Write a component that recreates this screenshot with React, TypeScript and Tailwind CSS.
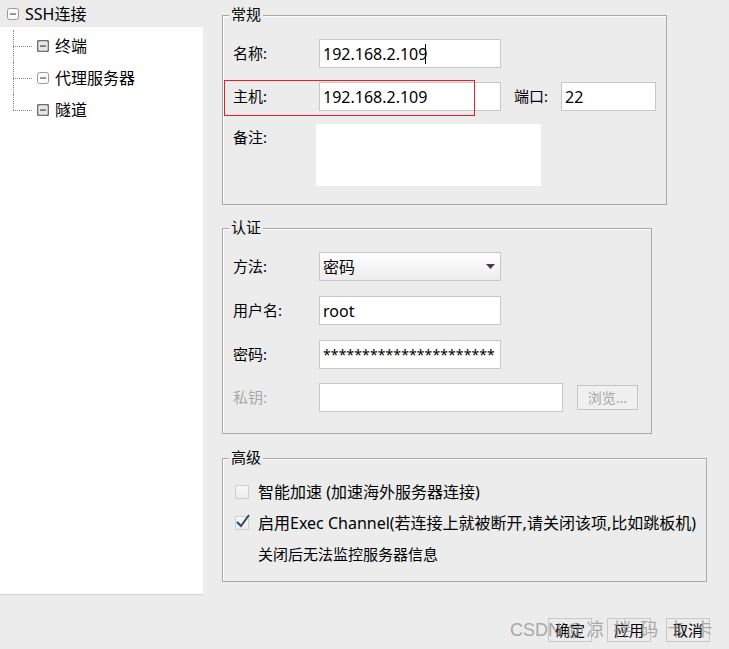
import React from "react";

const MinusBox = ({ dark = false }: { dark?: boolean }) => (
  <svg width="12" height="12" viewBox="0 0 12 12" className="shrink-0">
    <rect
      x="0.5"
      y="0.5"
      width="11"
      height="11"
      rx="2"
      fill={dark ? "#e6e6e6" : "#fafafa"}
      stroke={dark ? "#6e6e6e" : "#9a9a9a"}
      strokeWidth={dark ? 1.6 : 1}
    />
    <rect x="3" y="5.4" width="6" height="1.3" fill={dark ? "#555" : "#666"} />
  </svg>
);

const TreeChild = ({ label, last = false, dark = false }: { label: string; last?: boolean; dark?: boolean }) => (
  <div className="flex h-[32px] items-center">
    <div className="relative h-full w-[24px] shrink-0">
      <span
        className={
          last
            ? "absolute left-0 top-0 h-1/2 border-l border-dotted border-[#8c8c8c]"
            : "absolute left-0 top-0 h-full border-l border-dotted border-[#8c8c8c]"
        }
      />
      <span className="absolute left-0 top-1/2 w-[19px] border-t border-dotted border-[#8c8c8c]" />
    </div>
    <MinusBox dark={dark} />
    <span className="ml-[6px] text-[16px] text-black">{label}</span>
  </div>
);

const Input = ({ value, w, mono = false }: { value: string; w: string; mono?: boolean }) => (
  <div
    className={`${w} flex h-[29px] items-center overflow-hidden whitespace-nowrap border border-[#c8c8c8] bg-white pl-[3px] text-black ${
      mono ? "text-[14px] tracking-[0.1px]" : "text-[16px]"
    }`}
  >
    {value}
  </div>
);

const Group = ({
  title,
  className,
  children,
}: {
  title: string;
  className: string;
  children: React.ReactNode;
}) => (
  <div className={`relative border border-[#a8a8a8] shadow-[inset_1px_1px_0_#ffffff] ${className}`}>
    <span className="absolute left-[6px] top-[-13px] bg-[#ececec] px-[2px] text-[15px] leading-[22px] text-black">
      {title}
    </span>
    {children}
  </div>
);

export default function App() {
  return (
    <div className="relative flex h-[649px] w-[729px] items-start overflow-hidden bg-[#ececec] font-['Noto_Sans','Noto_Sans_CJK_SC',sans-serif]">
      {/* tree */}
      <div className="flex h-[595px] w-[203px] shrink-0 flex-col border-b border-[#d2d2d2] bg-white">
        <div className="flex h-[27px] items-center gap-[6px] bg-[#ebebeb] pl-[7px]">
          <MinusBox />
          <span className="text-[16px] text-black">SSH连接</span>
        </div>
        <div className="pl-[13px] pt-[3px]">
          <TreeChild label="终端" dark />
          <TreeChild label="代理服务器" />
          <TreeChild label="隧道" last dark />
        </div>
      </div>

      {/* form */}
      <div className="flex flex-1 flex-col pl-[19px] pt-[15px] text-[15px] text-black">
        <Group title="常规" className="h-[190px] w-[445px]">
          <div className="flex flex-col pl-[10px] pt-[23px]">
            <div className="flex items-center">
              <span className="w-[86px]">名称:</span>
              <div className="relative">
                <Input value="192.168.2.109" w="w-[182px]" />
                <span className="absolute left-[106px] top-[5px] h-[20px] w-px bg-black" />
              </div>
            </div>
            <div className="relative mt-[14px] flex items-center">
              <span className="w-[86px]">主机:</span>
              <Input value="192.168.2.109" w="w-[182px]" />
              <span className="ml-[13px] w-[47px]">端口:</span>
              <Input value="22" w="w-[95px]" />
              <span className="absolute left-[-9px] top-[-2px] h-[36px] w-[251px] border border-[#ec1c24]" />
            </div>
            <div className="mt-[13px] flex items-start">
              <span className="w-[83px] pt-[2px]">备注:</span>
              <div className="h-[62px] w-[225px] bg-white" />
            </div>
          </div>
        </Group>

        <Group title="认证" className="mt-[23px] h-[206px] w-[430px]">
          <div className="flex flex-col gap-[15px] pl-[10px] pt-[23px]">
            <div className="flex items-center">
              <span className="w-[86px]">方法:</span>
              <div className="flex h-[29px] w-[182px] items-center justify-between border border-[#c8c8c8] bg-gradient-to-b from-white to-[#ececec] pl-[3px] pr-[5px] text-[16px]">
                <span>密码</span>
                <svg width="9" height="5" viewBox="0 0 9 5">
                  <path d="M0 0 H9 L4.5 5 Z" fill="#4a3c4a" />
                </svg>
              </div>
            </div>
            <div className="flex items-center">
              <span className="w-[86px]">用户名:</span>
              <Input value="root" w="w-[182px]" />
            </div>
            <div className="flex items-center">
              <span className="w-[86px]">密码:</span>
              <Input value="**********************" w="w-[182px]" mono />
            </div>
            <div className="-mt-px flex items-center">
              <span className="w-[86px] text-[#a8a8a8]">私钥:</span>
              <div className="h-[29px] w-[244px] border border-[#c8c8c8] bg-white" />
              <div className="ml-[14px] flex h-[25px] w-[61px] items-center justify-center border border-[#c4c4c4] bg-[#f0f0f0] text-[14px] text-[#a6a6a6]">
                浏览...
              </div>
            </div>
          </div>
        </Group>

        <Group title="高级" className="mt-[24px] h-[124px] w-[485px]">
          <div className="flex flex-col pl-[12px] pt-[23px] text-[16px]">
            <div className="flex h-[20px] items-center">
              <span className="h-[14px] w-[14px] border border-[#cfcfcf] bg-gradient-to-b from-[#f7f7f7] to-[#ececec]" />
              <span className="ml-[9px]">智能加速 (加速海外服务器连接)</span>
            </div>
            <div className="mt-[11px] flex h-[20px] items-center">
              <span className="relative h-[14px] w-[14px] border border-[#cfcfcf] bg-gradient-to-b from-[#f7f7f7] to-[#ececec]">
                <svg width="16" height="16" viewBox="0 0 16 16" className="absolute left-[-1px] top-[-4px]">
                  <path d="M2 9 L6 13 L14 2" fill="none" stroke="#2c4a63" strokeWidth="2" />
                </svg>
              </span>
              <span className="ml-[9px] whitespace-nowrap">启用Exec Channel(若连接上就被断开,请关闭该项,比如跳板机)</span>
            </div>
            <div className="mt-[11px] flex h-[20px] items-center pl-[23px] text-[15px]">关闭后无法监控服务器信息</div>
          </div>
        </Group>

        <div className="mt-[36px] flex gap-[15px] pl-[326px]">
          <div className="flex h-[24px] w-[44px] items-center justify-center border border-[#c8c8c8] text-[15px]">确定</div>
          <div className="flex h-[24px] w-[44px] items-center justify-center border border-[#c8c8c8] text-[15px]">应用</div>
          <div className="flex h-[24px] w-[44px] items-center justify-center border border-[#c8c8c8] text-[15px]">取消</div>
        </div>
      </div>

      {/* watermark */}
      <span className="pointer-events-none absolute left-[510px] top-[617px] whitespace-nowrap text-[18px] text-[#8c8c8c] opacity-70 font-['Liberation_Sans','Noto_Sans_CJK_SC',sans-serif]">
        CSDN @<span className="ml-[2px] tracking-[9px]">凉拌码卡卡</span>
      </span>
    </div>
  );
}
